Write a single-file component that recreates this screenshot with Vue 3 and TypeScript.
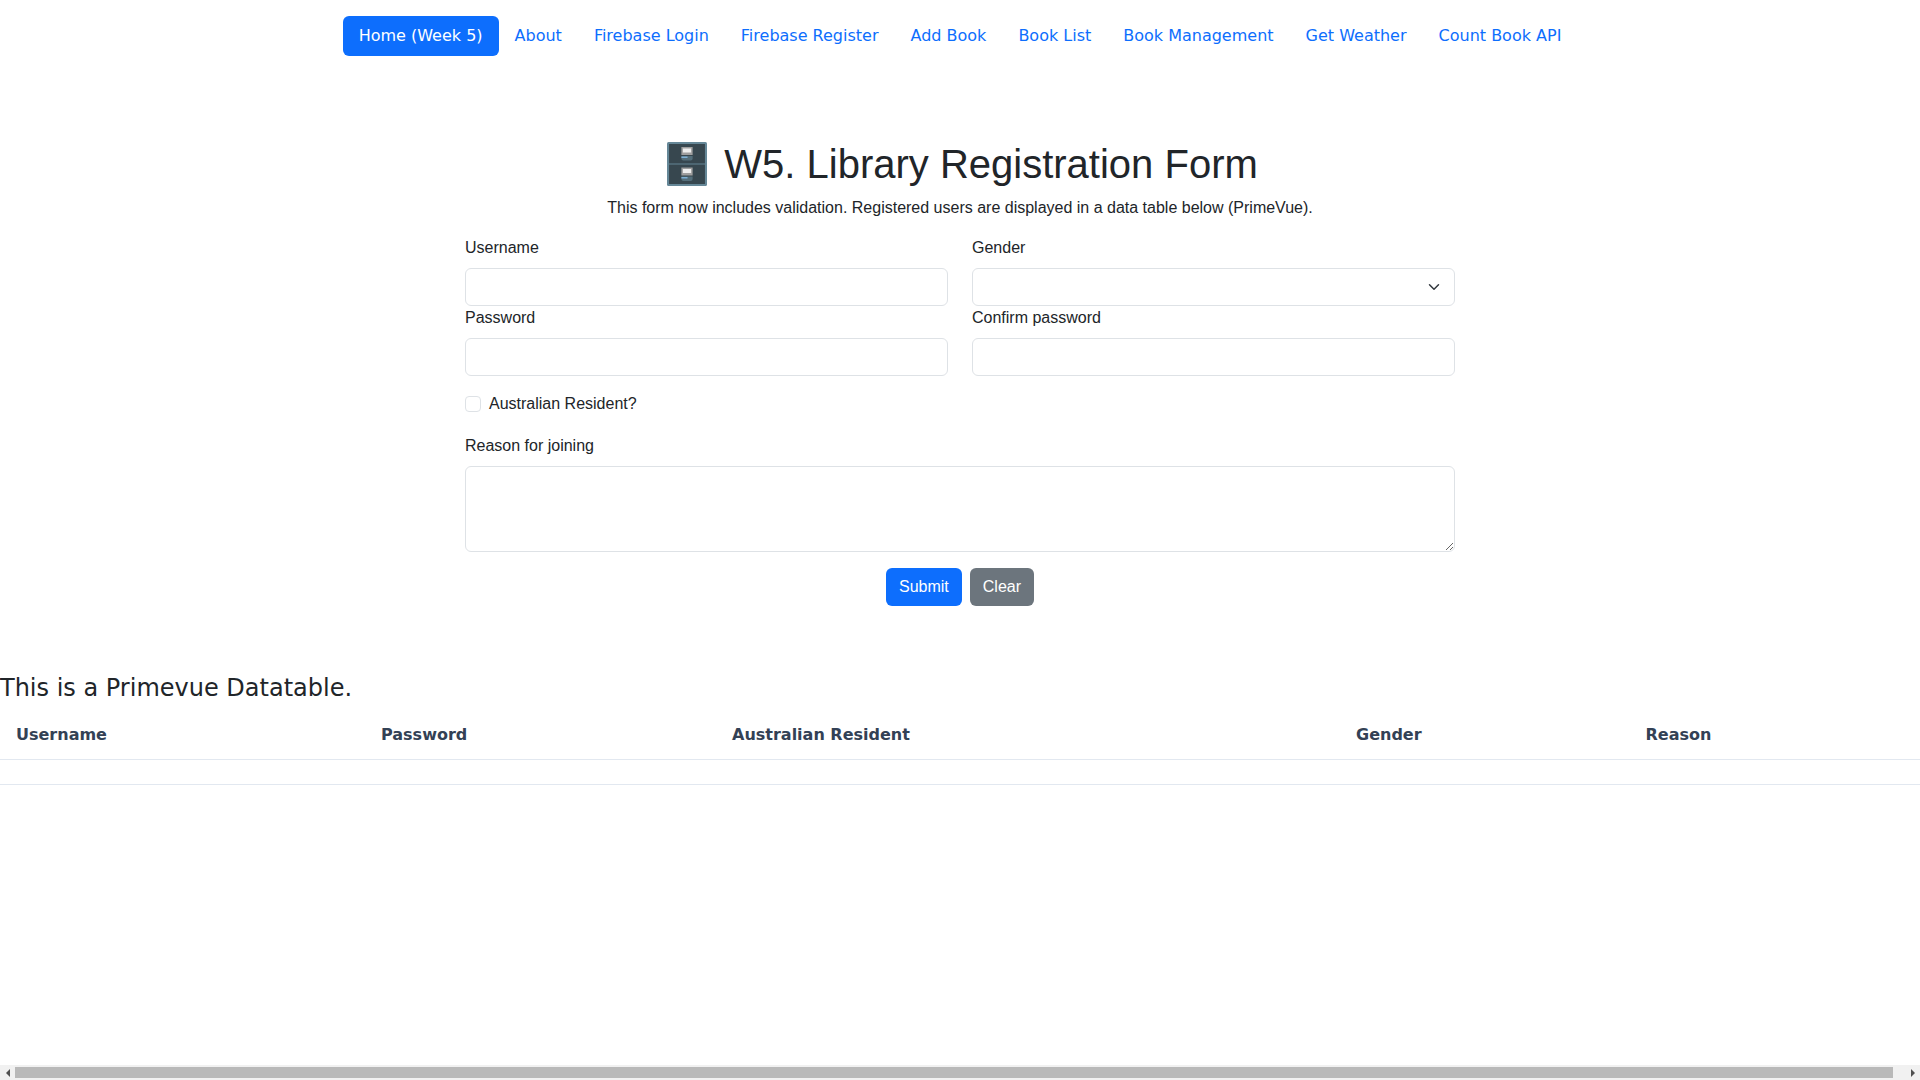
<template>
  <div class="page">
    <nav class="nav-pills">
      <a
        v-for="(item, index) in navItems"
        :key="item"
        class="nav-link"
        :class="{ active: index === 0 }"
        href="#"
      >{{ item }}</a>
    </nav>

    <main class="form-wrap">
      <h1 class="title">
        <svg class="cabinet" viewBox="0 0 39 44" preserveAspectRatio="none" aria-hidden="true">
          <rect x="0" y="0" width="39" height="44" rx="1.5" fill="#658797" />
          <rect x="2" y="2" width="35" height="19.5" fill="#37474f" />
          <rect x="2" y="22.5" width="35" height="19.5" fill="#37474f" />
          <g v-for="top in [5, 25.5]" :key="top">
            <rect x="14" :y="top" width="11" height="8" fill="#9e9e9e" />
            <rect x="15.5" :y="top + 1.5" width="8" height="4" fill="#eeeeee" />
            <path :d="`M14 ${top + 9}h11v2.5a2 2 0 0 1-2 2h-7a2 2 0 0 1-2-2z`" fill="#546e7a" />
            <rect x="14" :y="top + 9.5" width="6" height="1.5" fill="#90caf9" opacity="0.7" />
          </g>
        </svg>
        W5. Library Registration Form
      </h1>
      <p class="lead-text">This form now includes validation. Registered users are displayed in a data table below (PrimeVue).</p>

      <form @submit.prevent>
        <div class="field-grid">
          <div>
            <label class="form-label" for="username">Username</label>
            <input id="username" v-model="form.username" class="form-control" type="text" />
          </div>
          <div>
            <label class="form-label" for="gender">Gender</label>
            <select id="gender" v-model="form.gender" class="form-control form-select">
              <option value=""></option>
              <option value="female">Female</option>
              <option value="male">Male</option>
              <option value="other">Other</option>
            </select>
          </div>
          <div>
            <label class="form-label" for="password">Password</label>
            <input id="password" v-model="form.password" class="form-control" type="password" />
          </div>
          <div>
            <label class="form-label" for="confirm">Confirm password</label>
            <input id="confirm" v-model="form.confirm" class="form-control" type="password" />
          </div>
        </div>

        <div class="form-check">
          <input id="resident" v-model="form.resident" class="check-input" type="checkbox" />
          <label for="resident">Australian Resident?</label>
        </div>

        <div class="reason">
          <label class="form-label" for="reason">Reason for joining</label>
          <textarea id="reason" v-model="form.reason" class="form-control reason-input" rows="3"></textarea>
        </div>

        <div class="actions">
          <button class="btn btn-primary" type="submit">Submit</button>
          <button class="btn btn-secondary" type="button">Clear</button>
        </div>
      </form>
    </main>

    <section class="table-section">
      <h4 class="table-title">This is a Primevue Datatable.</h4>
      <table class="datatable">
        <thead>
          <tr>
            <th v-for="col in columns" :key="col.label" :style="{ width: col.width + 'px' }">{{ col.label }}</th>
          </tr>
        </thead>
        <tbody>
          <tr>
            <td :colspan="columns.length"></td>
          </tr>
        </tbody>
      </table>
    </section>

    <!-- headless browser hides native scrollbars, so this one is drawn -->
    <div class="scrollbar" aria-hidden="true">
      <span class="scroll-btn"><i class="arrow arrow-left"></i></span>
      <span class="scroll-track"><span class="scroll-thumb"></span></span>
      <span class="scroll-btn"><i class="arrow arrow-right"></i></span>
    </div>
  </div>
</template>

<script setup lang="ts">
import { reactive } from "vue";

const navItems = [
  "Home (Week 5)",
  "About",
  "Firebase Login",
  "Firebase Register",
  "Add Book",
  "Book List",
  "Book Management",
  "Get Weather",
  "Count Book API",
];

const columns = [
  { label: "Username", width: 365 },
  { label: "Password", width: 351 },
  { label: "Australian Resident", width: 624 },
  { label: "Gender", width: 289.5 },
  { label: "Reason", width: 302.5 },
];

const form = reactive({
  username: "",
  password: "",
  confirm: "",
  gender: "",
  resident: false,
  reason: "",
});
</script>

<style>
html,
body {
  margin: 0;
  background: #fff;
}
</style>

<style scoped>
.page {
  width: 100%;
  color: #212529;
  font-family: "Liberation Sans", Arial, sans-serif;
  font-size: 16px;
  line-height: 1.5;
}

.nav-pills {
  display: flex;
  justify-content: center;
  padding: 16px 0;
  font-family: "DejaVu Sans", sans-serif;
}

.nav-link {
  padding: 8px 16px;
  border-radius: 6px;
  color: #0d6efd;
  text-decoration: none;
}

.nav-link.active {
  background: #0d6efd;
  color: #fff;
}

.form-wrap {
  width: 990px;
  margin: 0 auto;
  padding-top: 68px;
}

.title {
  margin: 0 0 8px;
  padding-left: 5px;
  font-size: 40px;
  font-weight: 400;
  line-height: 48px;
  text-align: center;
}

.cabinet {
  width: 40px;
  height: 44px;
  margin-right: 6px;
  vertical-align: -8px;
}

.lead-text {
  margin: 0 0 16px;
  text-align: center;
}

.field-grid {
  display: grid;
  grid-template-columns: 1fr 1fr;
  column-gap: 24px;
}

.form-label {
  display: inline-block;
  margin-bottom: 8px;
}

.form-control {
  display: block;
  box-sizing: border-box;
  width: 100%;
  height: 38px;
  padding: 6px 12px;
  border: 1px solid #dee2e6;
  border-radius: 6px;
  background: #fff;
  color: #212529;
  font: inherit;
  outline: none;
}

.form-select {
  appearance: none;
  background-image: url("data:image/svg+xml,%3csvg xmlns='http://www.w3.org/2000/svg' viewBox='0 0 16 16'%3e%3cpath fill='none' stroke='%23343a40' stroke-linecap='round' stroke-linejoin='round' stroke-width='2' d='m2 5 6 6 6-6'/%3e%3c/svg%3e");
  background-repeat: no-repeat;
  background-position: right 12px center;
  background-size: 16px 12px;
}

.form-check {
  display: flex;
  align-items: center;
  gap: 8px;
  margin: 16px 0 18px;
}

.check-input {
  appearance: none;
  width: 16px;
  height: 16px;
  margin: 0;
  border: 1px solid #dee2e6;
  border-radius: 4px;
  background: #fff;
}

.reason-input {
  height: 86px;
  resize: vertical;
}

.actions {
  display: flex;
  justify-content: center;
  gap: 8px;
  margin-top: 16px;
}

.btn {
  padding: 6px 12px;
  border: 1px solid transparent;
  border-radius: 6px;
  color: #fff;
  font: inherit;
}

.btn-primary {
  background: #0d6efd;
}

.btn-secondary {
  background: #6c757d;
}

.table-section {
  width: calc(100% + 12px);
  margin-top: 68px;
  font-family: "DejaVu Sans", sans-serif;
}

.table-title {
  margin: 0 0 8px;
  font-size: 24px;
  font-weight: 500;
  line-height: 1.2;
}

.datatable {
  width: 100%;
  border-collapse: collapse;
  table-layout: fixed;
}

.datatable th {
  box-sizing: border-box;
  padding: 12px 16px;
  border-bottom: 1px solid #e2e8f0;
  color: #334155;
  font-weight: 700;
  text-align: left;
}

.datatable td {
  height: 24px;
  padding: 0;
  border-bottom: 1px solid #e2e8f0;
}

.scrollbar {
  position: fixed;
  left: 0;
  right: 0;
  bottom: 0;
  display: flex;
  height: 15px;
  background: #f1f1f1;
}

.scroll-btn {
  display: flex;
  flex: none;
  align-items: center;
  justify-content: center;
  width: 15px;
}

.arrow {
  width: 0;
  height: 0;
  border-top: 4px solid transparent;
  border-bottom: 4px solid transparent;
}

.arrow-left {
  border-right: 4px solid #505050;
}

.arrow-right {
  border-left: 4px solid #505050;
}

.scroll-track {
  display: flex;
  flex: 1;
  padding: 2px 12px 2px 0;
}

.scroll-thumb {
  flex: 1;
  background: #b9b9b9;
}
</style>
